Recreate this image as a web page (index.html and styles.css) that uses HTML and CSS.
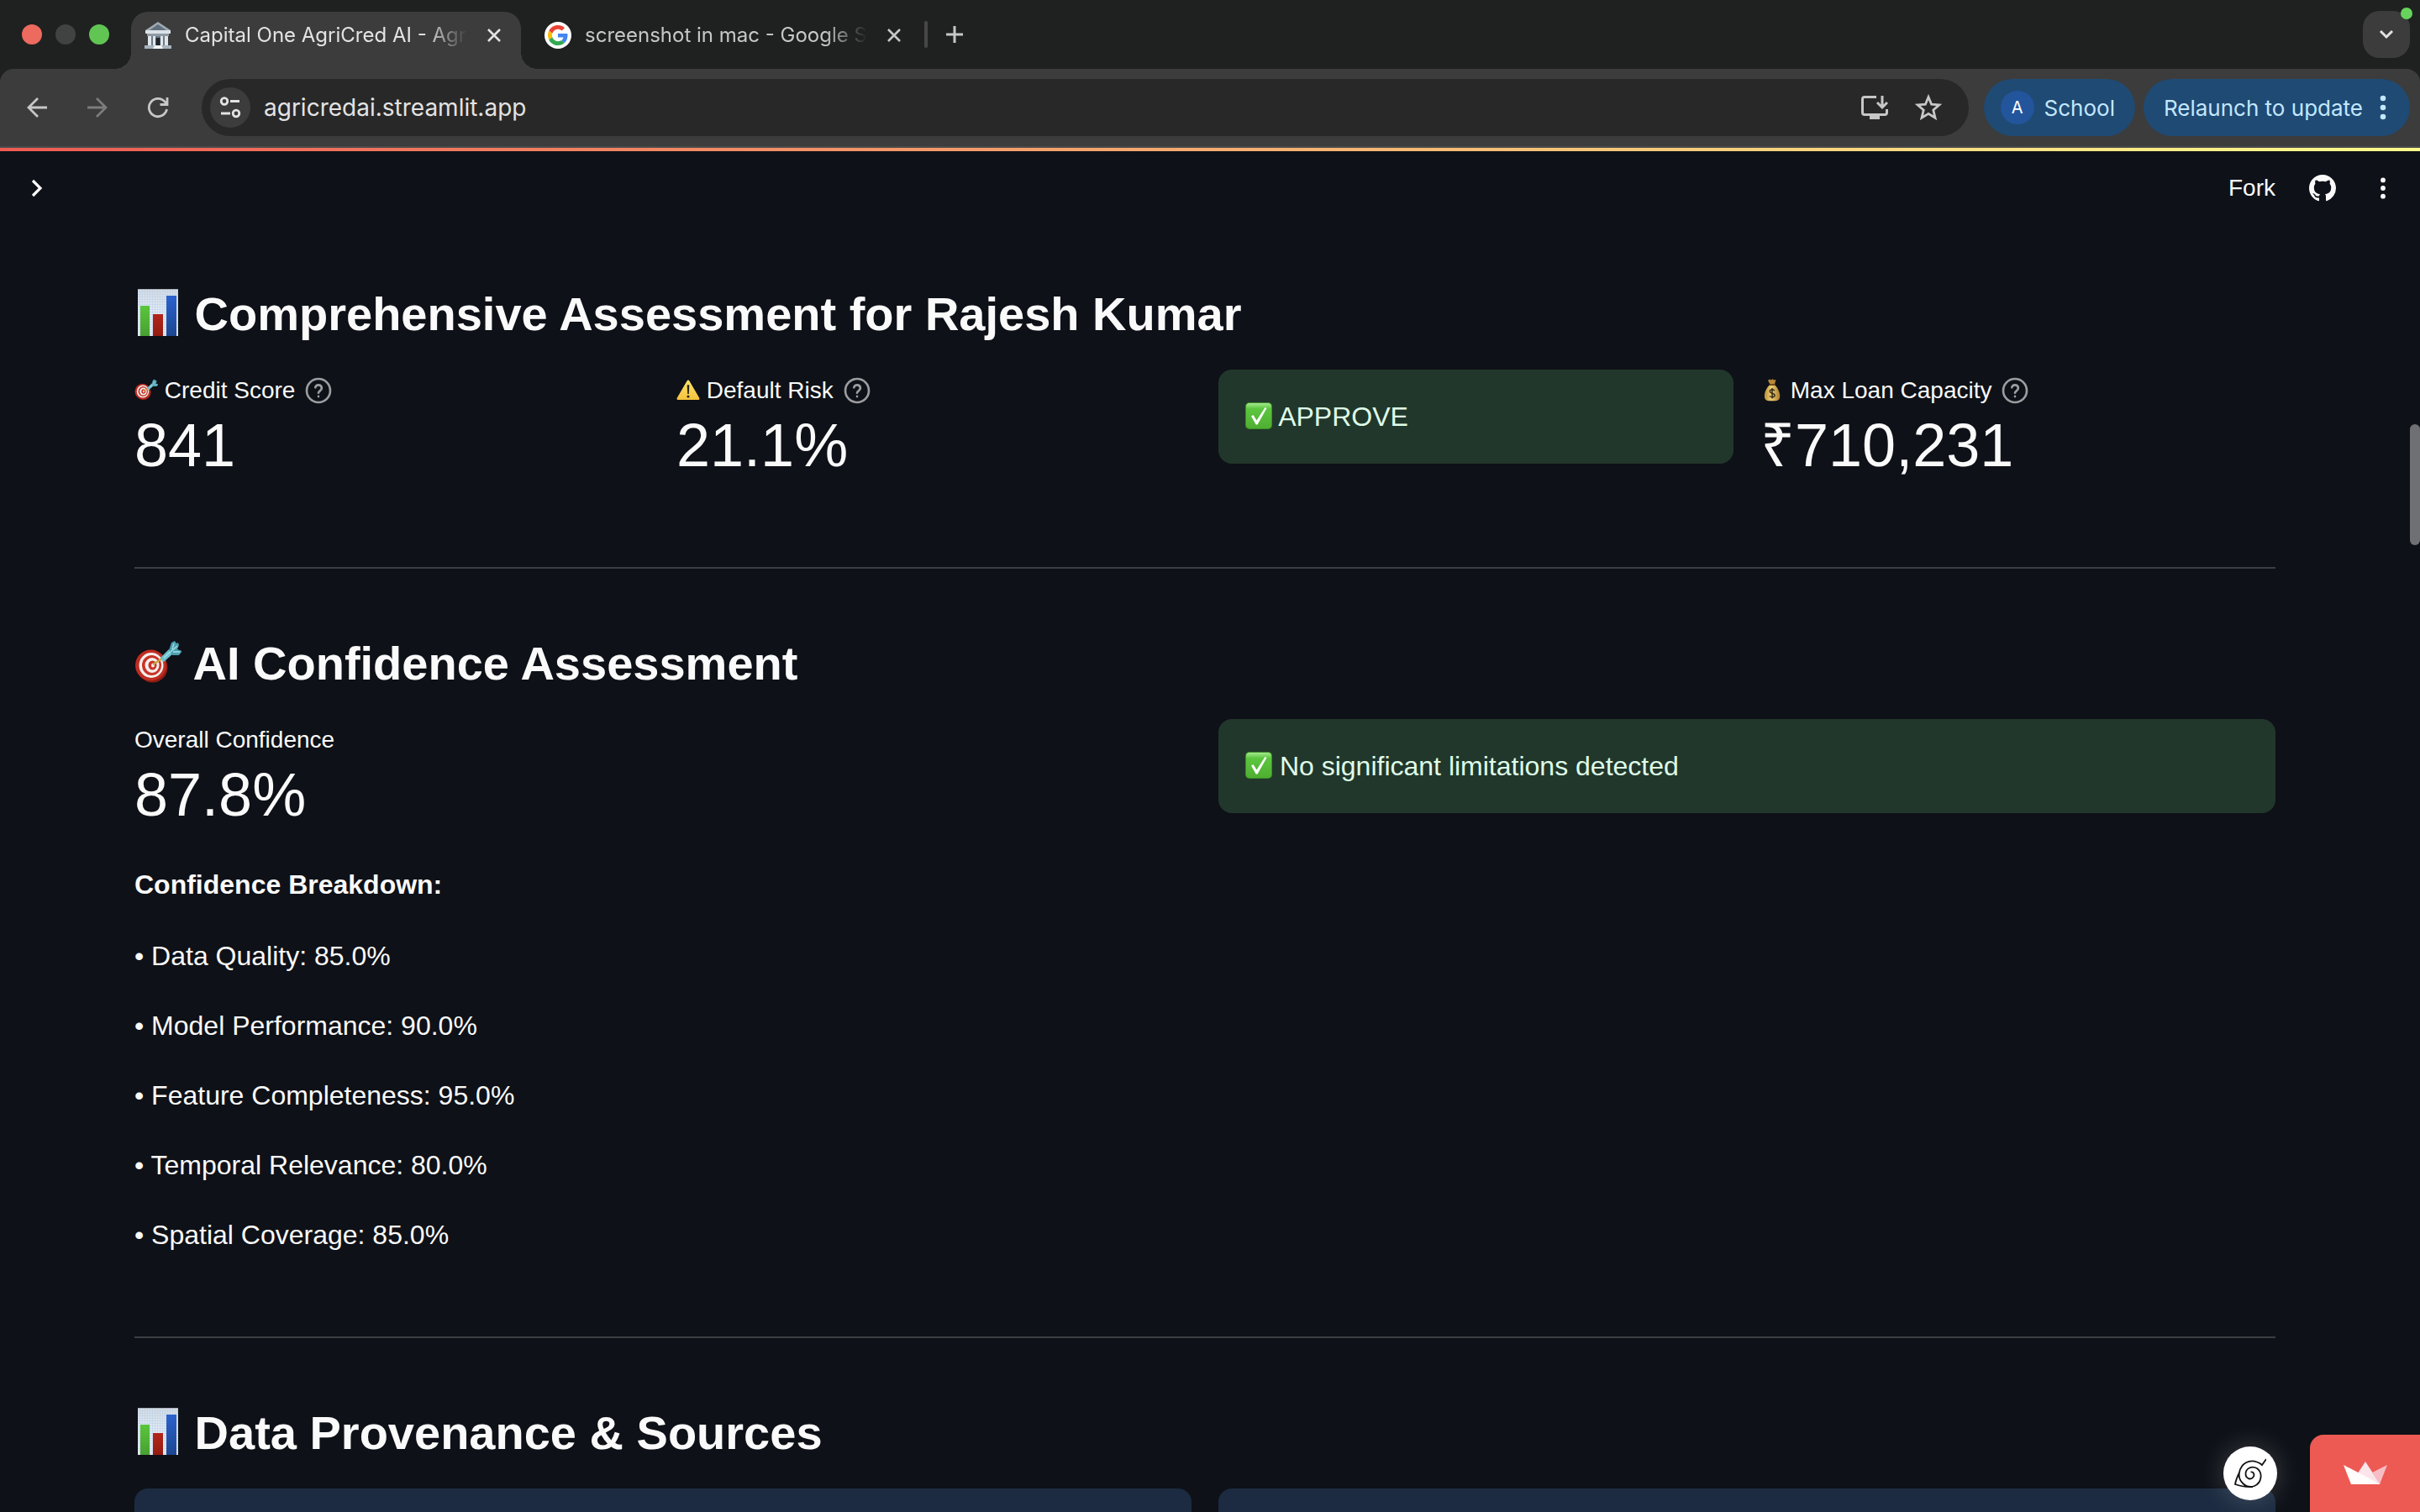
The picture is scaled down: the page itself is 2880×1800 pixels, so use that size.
FILE: index.html
```html
<!DOCTYPE html>
<html lang="en">
<head>
<meta charset="utf-8">
<title>Capital One AgriCred AI</title>
<link rel="stylesheet" href="styles.css">
</head>
<body>
<svg class="sprite" aria-hidden="true">
  <defs>
    <linearGradient id="g-paper" x1="0" y1="0" x2="0" y2="1"><stop offset="0" stop-color="#d3dbe4"/><stop offset=".4" stop-color="#e0e9f3"/><stop offset="1" stop-color="#e9edf1"/></linearGradient>
    <linearGradient id="g-green" x1="0" y1="0" x2="0" y2="1"><stop offset="0" stop-color="#5ac63b"/><stop offset="1" stop-color="#48a032"/></linearGradient>
    <linearGradient id="g-red" x1="0" y1="0" x2="0" y2="1"><stop offset="0" stop-color="#b3261b"/><stop offset="1" stop-color="#931b10"/></linearGradient>
    <linearGradient id="g-blue" x1="0" y1="0" x2="0" y2="1"><stop offset="0" stop-color="#2b62cd"/><stop offset="1" stop-color="#1d4692"/></linearGradient>
    <linearGradient id="g-check" x1="0" y1="0" x2="0" y2="1"><stop offset="0" stop-color="#a5e890"/><stop offset=".22" stop-color="#5cc63f"/><stop offset="1" stop-color="#4fae31"/></linearGradient>
    <linearGradient id="g-warn" x1="0" y1="0" x2="0" y2="1"><stop offset="0" stop-color="#fbe26c"/><stop offset="1" stop-color="#f5c33b"/></linearGradient>
    <linearGradient id="g-bag" x1="0" y1="0" x2="1" y2="0"><stop offset="0" stop-color="#b98f3c"/><stop offset=".45" stop-color="#f0cf72"/><stop offset="1" stop-color="#a87a2c"/></linearGradient>
    <pattern id="p-grid" width="3" height="3" patternUnits="userSpaceOnUse"><path d="M0 .5H3M.5 0V3" stroke="#b9cfe4" stroke-width=".5" fill="none"/></pattern>
  </defs>
  <symbol id="chart" viewBox="0 0 56 56">
    <rect x="4" width="48" height="56" fill="url(#g-paper)"/><rect x="4" width="48" height="56" fill="url(#p-grid)"/>
    <path d="M4 .5H52" stroke="#aab0b8"/>
    <rect x="7" y="20" width="11" height="36" fill="url(#g-green)"/>
    <rect x="22" y="30" width="12" height="26" fill="url(#g-red)"/>
    <rect x="38" y="8" width="12" height="48" fill="url(#g-blue)"/>
  </symbol>
  <symbol id="dart" viewBox="0 0 56 56">
    <ellipse cx="21.500" cy="34.500" rx="18" ry="18" fill="#8d1d14"/>
    <ellipse cx="19.500" cy="32" rx="18.500" ry="18.500" fill="#c02c22"/>
    <ellipse cx="20" cy="32" rx="14.500" ry="15" fill="#f4efec"/>
    <ellipse cx="20.500" cy="32" rx="11.500" ry="12" fill="#c93328"/>
    <ellipse cx="21" cy="32" rx="8.500" ry="9" fill="#f4efec"/>
    <ellipse cx="21.500" cy="32" rx="5" ry="5.500" fill="#c93328"/>
    <ellipse cx="22" cy="32" rx="2" ry="2.500" fill="#f4efec"/>
    <path d="M22 31L33 24" stroke="#caa13f" stroke-width="2.500"/>
    <path d="M31 23L41 13L46 18L35 28Q32 27 31 23Z" fill="#6fc0cf"/>
    <path d="M41 14L44 5L48 3L50 6L52 5L53 8L51 13L57 15L53 20L45 20Z" fill="#4b9fb0"/>
    <path d="M35 23L51 9M45 13L47 6M46 16L54 16" stroke="#a5e1e8" stroke-width="1.300"/>
  </symbol>
  <symbol id="warn" viewBox="0 0 28 28">
    <path d="M14 2.500Q15 2.500 15.600 3.800L27.400 24Q28 26 26.300 26H1.700Q0 26 .6 24L12.400 3.800Q13 2.500 14 2.500Z" fill="url(#g-warn)"/>
    <path d="M12.700 8.500Q14 7.600 15.300 8.500L14.800 19H13.200Z" fill="#2a2518"/><circle cx="14" cy="22" r="1.600" fill="#2a2518"/>
  </symbol>
  <symbol id="check" viewBox="0 0 32 32">
    <rect width="32" height="32" rx="5" fill="#3c8f28"/><rect x="1" y="1" width="30" height="30" rx="4" fill="url(#g-check)"/>
    <path d="M7 16.500L9.500 15L13.500 21.500L23.500 6L25.500 7L14.500 26.500H12.700Z" fill="#fff"/>
  </symbol>
  <symbol id="bag" viewBox="0 0 28 28">
    <path d="M9 3L11 1.500L13 2.500L14.500 1L16 2.500L18.500 2L17 7.500H11.500Z" fill="#b8893a"/>
    <path d="M11.300 8H17C20 11 23 16 23.300 21Q23.500 27 18 27.300H10Q4.600 27 4.800 21C5 16 8 11 11.300 8Z" fill="url(#g-bag)"/>
    <path d="M10.800 8.200H17.400" stroke="#7a4d1c" stroke-width="1.600"/>
    <path d="M17 15Q14 12.800 11.700 14.500Q10.200 17 14 18.200Q18 19.400 16.800 21.800Q14.500 24 11 21.500M14 12V24.500" stroke="#33291a" stroke-width="1.500" fill="none"/>
  </symbol>
  <symbol id="help" viewBox="0 0 24 24">
    <g fill="none" stroke="currentColor" stroke-width="2" stroke-linecap="round"><circle cx="12" cy="12" r="10.500"/><path d="M9.200 9.200A2.900 2.900 0 0 1 14.900 10C14.900 12 12 12.400 12 14"/><path d="M12 17.200V17.300"/></g>
  </symbol>
  <symbol id="dots" viewBox="0 0 8 32"><circle cx="4" cy="5" r="3.300" fill="currentColor"/><circle cx="4" cy="16" r="3.300" fill="currentColor"/><circle cx="4" cy="27" r="3.300" fill="currentColor"/></symbol>
  <symbol id="close" viewBox="0 0 16 16"><path d="M1 1L15 15M15 1L1 15" stroke="currentColor" stroke-width="2.600"/></symbol>
</svg>

<div class="browser">
  <div class="tab-strip">
    <div class="lights"><span class="light red"></span><span class="light gray"></span><span class="light green"></span></div>
    <div class="tab active">
      <svg class="favicon" viewBox="0 0 32 32"><path d="M16 0L31 10V12H1V10Z" fill="#9fa9b2"/><path d="M16 3L26 10H6Z" fill="#5f6f7e"/><path d="M1 10H31V14H1Z" fill="#dbe2e8"/><path d="M3 14H29V17H3Z" fill="#8f9aa4"/><path d="M4 17H28V29H4Z" fill="#6d7a87"/><path d="M4 17H8V29H4ZM10 17H13V29H10ZM19 17H22V29H19ZM24 17H28V29H24Z" fill="#dfe6ec"/><path d="M13.500 19H18.500V29H13.500Z" fill="#20262c"/><path d="M0 28H32V32H0Z" fill="#a8b3bd"/><path d="M12 28H20L22 32H10Z" fill="#f2f5f7"/></svg>
      <span class="tab-title">Capital One AgriCred AI - Agri</span>
      <button class="tab-close" aria-label="Close tab"><svg width="16" height="16"><use href="#close"/></svg></button>
    </div>
    <div class="tab">
      <svg class="favicon" viewBox="0 0 32 32"><circle cx="16" cy="16" r="16" fill="#fff"/><svg x="4" y="4" width="24" height="24" viewBox="0 0 48 48"><path fill="#EA4335" d="M24 9.500c3.540 0 6.710 1.220 9.210 3.600l6.850-6.850C35.900 2.380 30.470 0 24 0 14.620 0 6.510 5.380 2.560 13.220l7.980 6.190C12.430 13.720 17.740 9.500 24 9.500z"/><path fill="#4285F4" d="M46.980 24.550c0-1.570-.15-3.090-.38-4.550H24v9.020h12.940c-.58 2.960-2.260 5.480-4.780 7.180l7.730 6c4.510-4.180 7.090-10.360 7.090-17.650z"/><path fill="#FBBC05" d="M10.530 28.590c-.48-1.450-.76-2.990-.76-4.590s.27-3.140.76-4.590l-7.980-6.190C.92 16.460 0 20.120 0 24c0 3.880.92 7.540 2.560 10.780l7.970-6.190z"/><path fill="#34A853" d="M24 48c6.480 0 11.930-2.130 15.890-5.810l-7.730-6c-2.150 1.450-4.920 2.300-8.160 2.300-6.260 0-11.570-4.220-13.470-9.910l-7.980 6.190C6.510 42.620 14.620 48 24 48z"/></svg></svg>
      <span class="tab-title">screenshot in mac - Google S</span>
      <button class="tab-close" aria-label="Close tab"><svg width="16" height="16"><use href="#close"/></svg></button>
    </div>
    <span class="tab-sep"></span>
    <button class="new-tab" aria-label="New tab"><svg width="20" height="20" viewBox="0 0 20 20"><path d="M10 0V20M0 10H20" stroke="currentColor" stroke-width="3"/></svg></button>
    <button class="tab-search" aria-label="Search tabs"><svg width="18" height="12" viewBox="0 0 18 12"><path d="M2 2L9 9L16 2" stroke="currentColor" stroke-width="3" fill="none"/></svg><span class="rec-dot"></span></button>
  </div>
  <div class="toolbar">
    <button class="nav" aria-label="Back"><svg width="26" height="26" viewBox="0 0 26 26"><path d="M25 13H3M14 2L3 13L14 24" stroke="currentColor" stroke-width="2.800" fill="none"/></svg></button>
    <button class="nav disabled" aria-label="Forward"><svg width="26" height="26" viewBox="0 0 26 26"><path d="M1 13H23M12 2L23 13L12 24" stroke="currentColor" stroke-width="2.800" fill="none"/></svg></button>
    <button class="nav" aria-label="Reload"><svg width="26" height="26" viewBox="0 0 26 26"><path d="M23.500 15A10.700 10.700 0 1 1 21.500 6.500L24 9.500M24 1V9.500H15.500" stroke="currentColor" stroke-width="2.800" fill="none"/></svg></button>
    <div class="omnibox">
      <button class="site-info" aria-label="Site information"><svg width="26" height="26" viewBox="0 0 26 26"><g stroke="currentColor" stroke-width="2.800" fill="none"><circle cx="6" cy="5.500" r="3.800"/><path d="M13 5.500H24M2 20H13"/><circle cx="20" cy="20" r="3.800"/></g></svg></button>
      <input class="url" type="text" aria-label="Address" value="agricredai.streamlit.app">
      <button class="omni-btn" aria-label="Install app"><svg width="32" height="30" viewBox="0 0 32 30"><g stroke="currentColor" stroke-width="3" fill="none"><path d="M18 2.500H4Q1.500 2.500 1.500 5V21Q1.500 23.500 4 23.500H28Q30.500 23.500 30.500 21V17"/><path d="M25 1V14M19 9L25 15L31 9"/></g><path d="M10 23H22V29H10Z" fill="currentColor"/></svg></button>
      <button class="omni-btn" aria-label="Bookmark"><svg width="32" height="32" viewBox="0 0 32 32"><path d="M16 3.500L19.600 12.200L28.900 12.900L21.800 19L24 28.200L16 23.300L8 28.200L10.200 19L3.100 12.900L12.400 12.200Z" stroke="currentColor" stroke-width="2.800" fill="none"/></svg></button>
    </div>
    <button class="pill profile"><span class="avatar">A</span>School</button>
    <button class="pill relaunch">Relaunch to update<svg width="8" height="32"><use href="#dots"/></svg></button>
  </div>
</div>

<div class="app">
  <header class="app-header">
    <button class="icon-btn" aria-label="Open sidebar"><svg width="24" height="24" viewBox="0 0 24 24"><path d="M7 3L16 12L7 21" stroke="currentColor" stroke-width="3.200" fill="none"/></svg></button>
    <span class="grow"></span>
    <a class="fork" href="#">Fork</a>
    <a class="github" href="#" aria-label="GitHub"><svg width="32" height="32" viewBox="0 0 16 16"><path fill="currentColor" d="M8 0C3.580 0 0 3.580 0 8c0 3.540 2.290 6.530 5.470 7.590.4.070.55-.17.55-.38 0-.19-.01-.82-.01-1.490-2.010.37-2.530-.49-2.690-.94-.09-.23-.48-.94-.82-1.130-.28-.15-.68-.52-.01-.53.63-.01 1.080.58 1.230.82.72 1.210 1.870.87 2.330.66.07-.52.28-.87.51-1.070-1.780-.2-3.640-.89-3.640-3.950 0-.87.31-1.590.82-2.150-.08-.2-.36-1.020.08-2.120 0 0 .67-.21 2.200.82.64-.18 1.320-.27 2-.27s1.360.09 2 .27c1.530-1.040 2.200-.82 2.200-.82.44 1.100.16 1.920.08 2.120.51.56.82 1.270.82 2.150 0 3.070-1.870 3.750-3.650 3.950.29.25.54.73.54 1.480 0 1.070-.01 1.930-.01 2.200 0 .21.15.46.55.38A8.010 8.010 0 0 0 16 8c0-4.420-3.580-8-8-8z"/></svg></a>
    <button class="icon-btn" aria-label="Menu"><svg width="8" height="28" viewBox="0 0 8 32"><use href="#dots"/></svg></button>
  </header>

  <main class="content">
    <section>
      <h2><svg class="emoji"><use href="#chart"/></svg> Comprehensive Assessment for Rajesh Kumar</h2>
      <div class="row four">
        <div class="metric"><div class="label"><span><svg class="emoji"><use href="#dart"/></svg> Credit Score</span><svg class="help"><use href="#help"/></svg></div><div class="value">841</div></div>
        <div class="metric"><div class="label"><span><svg class="emoji"><use href="#warn"/></svg> Default Risk</span><svg class="help"><use href="#help"/></svg></div><div class="value">21.1%</div></div>
        <div class="alert success"><svg class="emoji"><use href="#check"/></svg> APPROVE</div>
        <div class="metric"><div class="label"><span><svg class="emoji"><use href="#bag"/></svg> Max Loan Capacity</span><svg class="help"><use href="#help"/></svg></div><div class="value">₹710,231</div></div>
      </div>
    </section>
    <hr>
    <section>
      <h2><svg class="emoji"><use href="#dart"/></svg> AI Confidence Assessment</h2>
      <div class="row two">
        <div class="breakdown">
          <div class="metric"><div class="label"><span>Overall Confidence</span></div><div class="value">87.8%</div></div>
          <p class="breakdown-title"><strong>Confidence Breakdown:</strong></p>
          <div class="stack">
            <p>• Data Quality: 85.0%</p>
            <p>• Model Performance: 90.0%</p>
            <p>• Feature Completeness: 95.0%</p>
            <p>• Temporal Relevance: 80.0%</p>
            <p>• Spatial Coverage: 85.0%</p>
          </div>
        </div>
        <div class="alert success"><svg class="emoji"><use href="#check"/></svg> No significant limitations detected</div>
      </div>
    </section>
    <hr>
    <section>
      <h2><svg class="emoji"><use href="#chart"/></svg> Data Provenance &amp; Sources</h2>
      <div class="row two"><div class="alert info"></div><div class="alert info"></div></div>
    </section>
  </main>
  <span class="scroll-thumb"></span>
  <button class="creator" aria-label="Creator profile"><svg width="38" height="36" viewBox="0 0 38 36"><path d="M19.500 16.500C23 15.500 24.500 20 22.500 22.500C19.500 26.500 13.500 24 13.500 18.500C13.500 12 21 8.500 27 12C34 17 33 29 24 33C14 37 4 27 6 17C8 6 18 1 27 4.500C30 5.500 32 7 33 8L38 1M6 17Q2 25 1 31Q10 34.500 22 34" stroke="#111" stroke-width="1.800" fill="none"/></svg></button>
  <button class="host" aria-label="Hosted with Streamlit"><svg width="52" height="28" viewBox="0 0 52 28"><path d="M26 0L43 26H9Z" fill="#fbe4ea"/><path d="M52 4L34 13L43 27Z" fill="#f7bdc5"/><path d="M0 4L44 27H9Z" fill="#fffdfc"/></svg></button>
</div>
</body>
</html>
```

FILE: styles.css
```css
* { box-sizing: border-box; }

html, body { height: 100%; }

body {
  margin: 0;
  display: flex;
  flex-direction: column;
  overflow: hidden;
  background: #0e1117;
  color: #fafafa;
  font-family: "Liberation Sans", Arial, sans-serif;
  font-size: 32px;
}

button {
  border: 0;
  padding: 0;
  margin: 0;
  background: none;
  color: inherit;
  font: inherit;
  display: flex;
  align-items: center;
  justify-content: center;
  flex: none;
}

svg { display: block; flex: none; }
.sprite { position: absolute; width: 0; height: 0; }

/* Browser window */
.browser {
  flex: none;
  background: #1f2120;
  color: #c7c7c7;
  font-family: Inter, "Liberation Sans", sans-serif;
  font-size: 24px;
}

.tab-strip {
  display: flex;
  align-items: center;
  height: 82px;
  padding: 0 12px 0 26px;
}

.lights { display: flex; gap: 16px; margin-right: 26px; }
.light { width: 24px; height: 24px; border-radius: 50%; }
.light.red { background: #ed6a5f; }
.light.gray { background: #414342; }
.light.green { background: #61c554; }

.tab {
  position: relative;
  align-self: flex-end;
  display: flex;
  align-items: center;
  width: 464px;
  height: 68px;
  padding: 0 20px 12px 16px;
  border-radius: 20px 20px 0 0;
}
.tab + .tab { width: 476px; padding-left: 28px; }
.tab.active { background: #3c3c3c; color: #e3e3e3; }
.tab.active::before,
.tab.active::after {
  content: "";
  position: absolute;
  bottom: 0;
  width: 20px;
  height: 20px;
}
.tab.active::before { right: 100%; background: radial-gradient(circle at 0 0, transparent 20px, #3c3c3c 20px); }
.tab.active::after { left: 100%; background: radial-gradient(circle at 100% 0, transparent 20px, #3c3c3c 20px); }

.favicon { width: 32px; height: 32px; }
.tab-title {
  flex: 1;
  min-width: 0;
  margin: 0 20px 0 16px;
  overflow: hidden;
  white-space: nowrap;
  line-height: 32px;
  -webkit-mask-image: linear-gradient(90deg, #000 85%, transparent);
  mask-image: linear-gradient(90deg, #000 85%, transparent);
}
.tab-close { width: 24px; height: 24px; }
.tab-sep { width: 4px; height: 32px; margin-left: 4px; border-radius: 2px; background: #474747; }
.new-tab { width: 64px; height: 56px; }
.tab-search {
  position: relative;
  width: 56px;
  height: 56px;
  margin-left: auto;
  border-radius: 20px;
  background: #3c3c3c;
  color: #e3e3e3;
}
.rec-dot {
  position: absolute;
  top: -4px;
  right: -3px;
  width: 14px;
  height: 14px;
  border-radius: 50%;
  background: #66d45c;
}

.toolbar {
  display: flex;
  align-items: center;
  height: 94px;
  padding: 0 12px 0 8px;
  border-bottom: 2px solid #4a4a4a;
  border-radius: 16px 16px 0 0;
  background: #3c3c3c;
}
.nav { width: 72px; height: 68px; }
.nav.disabled { color: #7c7c7c; }
.omnibox {
  flex: 1;
  display: flex;
  align-items: center;
  height: 68px;
  margin: 0 18px 0 16px;
  padding: 0 32px 0 10px;
  border-radius: 34px;
  background: #282828;
}
.site-info { width: 48px; height: 48px; border-radius: 50%; background: #3c3c3c; color: #e3e3e3; }
.url {
  flex: 1;
  min-width: 0;
  border: 0;
  outline: 0;
  padding: 0 16px;
  background: none;
  color: #e3e3e3;
  font: inherit;
  font-size: 28px;
}
.omni-btn { margin-left: 32px; }
.pill {
  height: 68px;
  border-radius: 34px;
  background: #1f4a73;
  color: #c2e7ff;
  font-size: 26px;
}
.profile { padding: 0 24px 0 20px; margin-right: 10px; gap: 12px; }
.avatar {
  display: flex;
  align-items: center;
  justify-content: center;
  width: 40px;
  height: 40px;
  border-radius: 50%;
  background: #23559c;
  color: #fff;
  font-size: 20px;
}
.relaunch { padding: 0 28px 0 24px; gap: 20px; }

/* Streamlit page */
.app {
  position: relative;
  flex: 1;
  min-height: 0;
  display: flex;
  flex-direction: column;
}
.app::before {
  content: "";
  flex: none;
  height: 4px;
  background: linear-gradient(90deg, #ee5b54, #fcfd8c);
}
.app-header {
  display: flex;
  align-items: center;
  flex: none;
  height: 88px;
  padding: 0 24px;
}
.icon-btn { width: 40px; height: 40px; }
.grow { flex: 1; }
.fork { color: inherit; text-decoration: none; font-size: 28px; }
.github { color: inherit; margin: 0 36px 0 40px; }

.content {
  flex: 1;
  min-height: 0;
  overflow: hidden;
  padding: 72px 172px 0 160px;
}

h2 {
  margin: 0 0 33px;
  font-size: 56px;
  line-height: 67px;
  font-weight: 700;
}
.emoji {
  display: inline-block;
  width: 1em;
  height: 1em;
  vertical-align: -0.125em;
}

.row { display: grid; gap: 32px; align-items: start; }
.four { grid-template-columns: repeat(4, 1fr); }
.two { grid-template-columns: repeat(2, 1fr); }

.metric { padding-bottom: 10px; }
.label {
  display: flex;
  align-items: center;
  gap: 12px;
  font-size: 28px;
  line-height: 50px;
}
.help { width: 32px; height: 32px; color: #9c9da0; }
.value { font-size: 72px; line-height: 80px; }

p { margin: 0; line-height: 52px; }
.breakdown-title { margin: 31px 0 33px; }
.stack { display: flex; flex-direction: column; gap: 31px; }

.alert {
  min-height: 112px;
  padding: 30px 32px;
  border-radius: 16px;
  line-height: 52px;
}
.success { background: #22372b; color: #dffde9; }
.info { background: #1c2b41; }

hr {
  margin: 95px 0 79px;
  border: 0;
  height: 2px;
  background: #3c3e43;
}

/* Overlays */
.scroll-thumb {
  position: absolute;
  top: 329px;
  right: 0;
  width: 12px;
  height: 144px;
  border-radius: 6px;
  background: #6f7073;
}
.creator {
  position: absolute;
  right: 170px;
  bottom: 14px;
  width: 64px;
  height: 64px;
  border-radius: 50%;
  background: #fff;
  box-shadow: 0 0 32px rgba(255, 255, 255, 0.2);
}
.host {
  position: absolute;
  right: 0;
  bottom: 0;
  width: 131px;
  height: 92px;
  border-radius: 16px 0 0 0;
  background: #ed5a53;
}
```
